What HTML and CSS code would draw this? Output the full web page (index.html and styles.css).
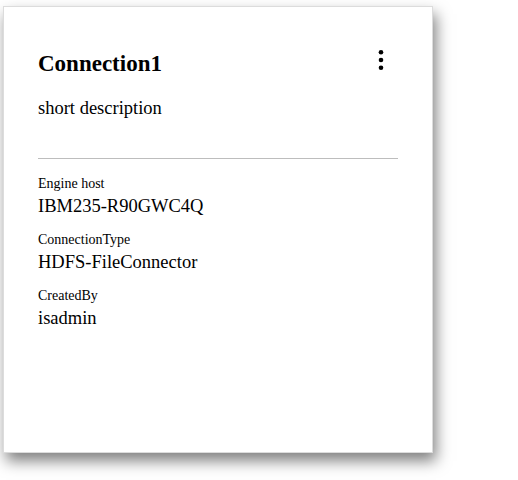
FILE: index.html
```html
<!DOCTYPE html>
<html>
<head>
<meta charset="utf-8">
<link rel="stylesheet" href="styles.css">
</head>
<body>
<div class="card">
  <div class="card-header">
    <h2 class="title">Connection1</h2>
    <svg class="kebab" width="6" height="22" viewBox="0 0 6 22" aria-label="menu">
      <circle cx="3" cy="3.3" r="2.3" fill="#000"/>
      <circle cx="3" cy="11" r="2.3" fill="#000"/>
      <circle cx="3" cy="18.7" r="2.3" fill="#000"/>
    </svg>
  </div>
  <p class="desc">short description</p>
  <hr class="divider">
  <div class="fields">
    <div class="field">
      <div class="label">Engine host</div>
      <div class="value">IBM235-R90GWC4Q</div>
    </div>
    <div class="field">
      <div class="label">ConnectionType</div>
      <div class="value">HDFS-FileConnector</div>
    </div>
    <div class="field">
      <div class="label">CreatedBy</div>
      <div class="value">isadmin</div>
    </div>
  </div>
</div>
</body>
</html>
```

FILE: styles.css
```css
html, body {
  margin: 0;
  padding: 0;
  background: #fff;
}
body {
  box-sizing: border-box;
  min-height: 480px;
  padding: 6px 0 0 3px;
  font-family: "Liberation Serif", "Times New Roman", serif;
  color: #000;
}
.card {
  box-sizing: border-box;
  width: 430px;
  height: 447px;
  background: #fff;
  border: 1px solid #dcdcdc;
  box-shadow: 3px 8px 14px rgba(0, 0, 0, 0.5);
  padding: 43px 34px 0 34px;
  display: flex;
  flex-direction: column;
}
.card-header {
  display: flex;
  justify-content: space-between;
  align-items: flex-start;
}
.title {
  margin: 0;
  font-size: 23px;
  line-height: 28px;
  font-weight: bold;
}
.kebab {
  margin: -1px 14px 0 0;
  display: block;
}
.desc {
  margin: 19px 0 0 0;
  font-size: 18.5px;
  line-height: 22px;
}
.divider {
  margin: 39px 0 0 0;
  border: 0;
  height: 1px;
  background: #bdbdbd;
}
.fields {
  margin-top: 17px;
  display: flex;
  flex-direction: column;
  gap: 15px;
}
.field {
  display: flex;
  flex-direction: column;
  gap: 3px;
}
.label {
  font-size: 14px;
  line-height: 16px;
}
.value {
  font-size: 18.5px;
  line-height: 22px;
}
```
